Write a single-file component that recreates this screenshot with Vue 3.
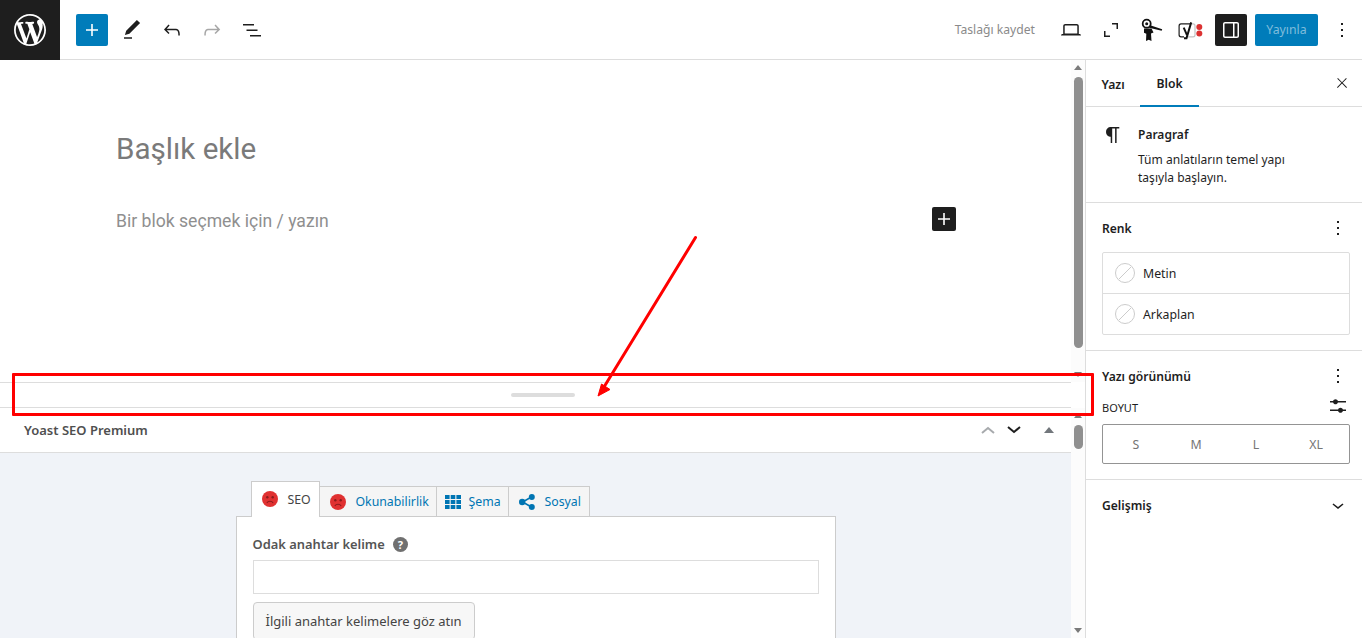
<script setup>
const icons = {
  plus: 'M18 11.2h-5.2V6h-1.6v5.2H6v1.6h5.2V18h1.6v-5.2H18z',
  pencil: 'M20.1 5.1L16.9 2 6.2 12.7l-1.3 4.4 4.5-1.3L20.1 5.1zM4 20.8h8v-1.5H4v1.5z',
  undo: 'M18.3 11.7c-.6-.6-1.4-.9-2.3-.9H6.7l2.9-3.3-1.1-1-4.5 5L8.5 16l1-1-2.7-2.7H16c.5 0 .9.2 1.3.5 1 1 1 3.4 1 4.5v.3h1.5v-.2c0-1.5 0-4.3-1.5-5.7z',
  redo: 'M15.6 6.5l-1.1 1 2.9 3.3H8c-.9 0-1.7.3-2.3.9-1.4 1.5-1.4 4.2-1.4 5.6v.2h1.500v-.3c0-1.1 0-3.5 1-4.5.3-.3.7-.5 1.3-.5h9.2L14.5 15l1.1 1.1 4.6-4.6-4.6-5z',
  list: 'M3 6h11v1.5H3V6zm3.5 5.5h11V13h-11v-1.5zM21 17H10v1.5h11V17z',
  laptop: 'M20.5 16h-.7V8c0-1.1-.9-2-2-2H6.2c-1.1 0-2 .9-2 2v8h-.7c-.8 0-1.5.7-1.5 1.5h20c0-.8-.7-1.5-1.5-1.5zM5.7 8c0-.3.2-.5.5-.5h11.6c.3 0 .5.2.5.5v7.6H5.7V8z',
  fullscreen: 'M13 5h6v6h-1.5V6.5H13V5zM5 13h1.500v4.500H11V19H5v-6z',
  sidebar: 'M18 4H6c-1.1 0-2 .9-2 2v12c0 1.1.9 2 2 2h12c1.1 0 2-.9 2-2V6c0-1.1-.9-2-2-2zm-4 14.5H6c-.3 0-.5-.2-.5-.5V6c0-.3.2-.5.5-.5h8v13zm4.5-.5c0 .3-.2.5-.5.5h-2.5v-13H18c.3 0 .5.2.5.5v12z',
  more: 'M13 19h-2v-2h2v2zm0-6h-2v-2h2v2zm0-6h-2V5h2v2z',
  close: 'M13 11.8l6.1-6.3-1-1-6.1 6.2-6.1-6.2-1 1 6.1 6.3-6.5 6.7 1 1 6.5-6.6 6.5 6.6 1-1z',
  paragraph: 'M18.3 4H9.9v-.1l-.9.2c-2.3.4-4 2.4-4 4.8s1.7 4.4 4 4.8l.7.1V20h1.5V5.5h2.9V20h1.5V5.5h2.7V4z',
  chevron: 'M17.5 11.6L12 16l-5.5-4.4.9-1.2L12 14l4.5-3.6 1 1.2z',
  settings: 'M14.5 13.8c-1.1 0-2.1.7-2.4 1.8H4V17h8.1c.3 1 1.3 1.8 2.4 1.8s2.1-.7 2.4-1.8H20v-1.5h-3.1c-.3-1-1.3-1.7-2.4-1.7zM11.9 7c-.3-1-1.3-1.8-2.4-1.8S7.4 6 7.1 7H4v1.5h3.1c.3 1 1.3 1.8 2.4 1.8s2.1-.7 2.4-1.8H20V7h-8.1z',
}
const wp = 'M20 10c0-5.51-4.49-10-10-10C4.48 0 0 4.49 0 10c0 5.52 4.48 10 10 10 5.51 0 10-4.48 10-10zM7.78 15.37L4.37 6.22c.55-.02 1.17-.08 1.17-.08.5-.06.44-1.13-.06-1.11 0 0-1.45.11-2.37.11-.18 0-.37 0-.58-.01C4.12 2.69 6.87 1.11 10 1.11c2.33 0 4.45.87 6.05 2.34-.68-.11-1.65.39-1.65 1.58 0 .74.45 1.36.9 2.1.35.61.55 1.36.55 2.46 0 1.49-1.4 5-1.4 5l-3.03-8.37c.54-.02.82-.17.82-.17.5-.05.44-1.25-.06-1.22 0 0-1.44.12-2.38.12-.87 0-2.33-.12-2.33-.12-.5-.03-.56 1.2-.06 1.22l.92.08 1.26 3.41zM17.41 10c.24-.64.74-1.87.43-4.25.7 1.29 1.05 2.71 1.05 4.25 0 3.29-1.73 6.24-4.4 7.78.97-2.59 1.94-5.2 2.92-7.78zM6.1 18.09C3.12 16.65 1.11 13.53 1.11 10c0-1.3.23-2.48.72-3.59C3.25 10.3 4.67 14.2 6.1 18.09zm4.03-6.63l2.58 6.98c-.86.29-1.76.45-2.71.45-.79 0-1.57-.11-2.29-.33.81-2.38 1.62-4.74 2.42-7.1z'
const sizes = ['S', 'M', 'L', 'XL']
const colors = ['Metin', 'Arkaplan']
</script>

<template>
  <div class="page">
    <header class="topbar">
      <div class="logo">
        <svg width="32" height="32" viewBox="0 0 20 20"><path fill="#fff" :d="wp" /></svg>
      </div>
      <div class="tools">
        <button class="inserter"><svg class="ic" viewBox="0 0 24 24"><path fill="#fff" :d="icons.plus" /></svg></button>
        <span class="tool first"><svg class="ic" viewBox="0 0 24 24"><path :d="icons.pencil" /></svg></span>
        <span class="tool"><svg class="ic" viewBox="0 0 24 24"><path :d="icons.undo" /></svg></span>
        <span class="tool"><svg class="ic" viewBox="0 0 24 24"><path fill="#a7a7a7" :d="icons.redo" /></svg></span>
        <span class="tool"><svg class="ic" viewBox="0 0 24 24"><path :d="icons.list" /></svg></span>
      </div>
      <div class="actions">
        <span class="save">Taslağı kaydet</span>
        <span class="tool"><svg class="ic" viewBox="0 0 24 24"><path :d="icons.laptop" /></svg></span>
        <span class="tool"><svg class="ic" viewBox="0 0 24 24"><path :d="icons.fullscreen" /></svg></span>
        <span class="tool"><svg class="ic" viewBox="0 0 24 24">
          <circle cx="7.700" cy="5.700" r="4" fill="none" stroke="#111" stroke-width="1.800" />
          <circle cx="7.700" cy="5.700" r="1.500" fill="#111" />
          <path d="M11.200 7.300L23.200 11.200l-.5 1.600L10 9.800z" fill="#111" />
          <path d="M5 10.500h7.500l2 4-2.500 1 .5 7.500-2.800-1.300-2.700 1.300.3-7.300-2.300-1z" fill="#111" />
        </svg></span>
        <span class="tool yoast"><svg width="28" height="24" viewBox="0 0 28 24">
          <path d="M14 5.900H5C3.800 5.900 3.100 6.700 3.100 8v8.800c0 1.200.7 2 1.900 2h3" fill="none" stroke="#1e1e1e" stroke-width="1.200" />
          <path d="M15.500 5.900H17c1.200 0 2 .8 2 2v9c0 1.200-.8 1.900-2 1.900h-5.500" fill="none" stroke="#c4c4c4" stroke-width="1.200" />
          <path d="M7.700 9.600l3.300 7.600" fill="none" stroke="#111" stroke-width="2" />
          <path d="M15.200 4.400l-4.700 15.800H8" fill="none" stroke="#111" stroke-width="2" />
          <circle cx="23.300" cy="9" r="3" fill="#dc3232" />
          <circle cx="23.300" cy="15.500" r="3" fill="#dc3232" />
        </svg></span>
        <span class="side-toggle"><svg class="ic" viewBox="0 0 24 24"><path fill="#fff" :d="icons.sidebar" /></svg></span>
        <span class="publish">Yayınla</span>
        <span class="more-top"><svg class="ic" viewBox="0 0 24 24"><path :d="icons.more" /></svg></span>
      </div>
    </header>

    <div class="body">
      <main class="left">
        <section class="editor">
          <div class="canvas">
            <h1 class="title">Başlık ekle</h1>
            <div class="para-row">
              <span class="para-ph">Bir blok seçmek için / yazın</span>
              <span class="block-plus"><svg width="24" height="24" viewBox="0 0 24 24"><path fill="#fff" :d="icons.plus" /></svg></span>
            </div>
          </div>
          <div class="scrollbar">
            <i class="arrow up a1"></i>
            <i class="thumb thumb-a"></i>
            <i class="arrow down push"></i>
          </div>
        </section>

        <div class="resizer"><i class="grip"></i></div>

        <section class="metabox">
          <div class="mb-main">
            <div class="mb-head">
              <span class="mb-title">Yoast SEO Premium</span>
              <div class="mb-ctrl">
                <svg class="chev" viewBox="0 0 14 8"><path d="M1 7l6-5 6 5" fill="none" stroke="#a7aaad" stroke-width="2" /></svg>
                <svg class="chev chev-b" viewBox="0 0 14 8"><path d="M1 1l6 5 6-5" fill="none" stroke="#1e1e1e" stroke-width="2" /></svg>
                <i class="tri"></i>
              </div>
            </div>
            <div class="mb-content">
              <div class="panel-wrap">
                <div class="tabs">
                  <div class="tab active">
                    <svg class="face" viewBox="0 0 16 16"><circle cx="8" cy="8" r="8" fill="#e03131" /><circle cx="5.300" cy="6.300" r="1.200" fill="#8a1c1c" /><circle cx="10.700" cy="6.300" r="1.200" fill="#8a1c1c" /><path d="M4.800 12c1.500-2.300 4.900-2.300 6.400 0" fill="none" stroke="#8a1c1c" stroke-width="1.100" /></svg>
                    <span>SEO</span>
                  </div>
                  <div class="tab t-read">
                    <svg class="face" viewBox="0 0 16 16"><circle cx="8" cy="8" r="8" fill="#e03131" /><circle cx="5.300" cy="6.300" r="1.200" fill="#8a1c1c" /><circle cx="10.700" cy="6.300" r="1.200" fill="#8a1c1c" /><path d="M4.800 12c1.500-2.300 4.900-2.300 6.400 0" fill="none" stroke="#8a1c1c" stroke-width="1.100" /></svg>
                    <span>Okunabilirlik</span>
                  </div>
                  <div class="tab t-schema">
                    <svg class="grid-ic" viewBox="0 0 16 16"><path fill="#0075b3" d="M0 1h4.600v4H0zM5.700 1h4.600v4H5.700zM11.400 1H16v4h-4.600zM0 6h4.600v4H0zM5.700 6h4.600v4H5.700zM11.400 6H16v4h-4.600zM0 11h4.600v4H0zM5.700 11h4.600v4H5.700zM11.400 11H16v4h-4.600z" /></svg>
                    <span>Şema</span>
                  </div>
                  <div class="tab t-social">
                    <svg class="share-ic" viewBox="0 0 16 16"><path d="M12.500 3L3.500 8l9 5" fill="none" stroke="#0075b3" stroke-width="1.600" /><circle cx="12.800" cy="3" r="3" fill="#0075b3" /><circle cx="3.200" cy="8" r="3.200" fill="#0075b3" /><circle cx="12.800" cy="13" r="3" fill="#0075b3" /></svg>
                    <span>Sosyal</span>
                  </div>
                </div>
                <div class="panel">
                  <div class="kw-label">
                    <span>Odak anahtar kelime</span>
                    <span class="help">?</span>
                  </div>
                  <div class="kw-input"></div>
                  <div class="kw-btn">İlgili anahtar kelimelere göz atın</div>
                </div>
              </div>
            </div>
          </div>
          <div class="scrollbar">
            <i class="arrow up a2"></i>
            <i class="thumb thumb-b"></i>
            <i class="arrow down push"></i>
          </div>
        </section>
      </main>

      <aside class="sidebar">
        <div class="side-tabs">
          <span class="side-tab">Yazı</span>
          <span class="side-tab current">Blok</span>
          <svg class="side-close" viewBox="0 0 24 24"><path :d="icons.close" /></svg>
        </div>

        <div class="card">
          <svg class="ic card-ic" viewBox="0 0 24 24"><path :d="icons.paragraph" /></svg>
          <div>
            <div class="card-title">Paragraf</div>
            <p class="card-desc">Tüm anlatıların temel yapı<br />taşıyla başlayın.</p>
          </div>
        </div>

        <div class="group g-color">
          <div class="g-head"><span class="g-title">Renk</span><svg class="ic" viewBox="0 0 24 24"><path :d="icons.more" /></svg></div>
          <div class="color-box">
            <div v-for="c in colors" :key="c" class="color-row">
              <svg width="20" height="20" viewBox="0 0 20 20"><circle cx="10" cy="10" r="9.500" fill="#fff" stroke="#ccc" /><path d="M4 16L16 4" stroke="#ccc" /></svg>
              <span>{{ c }}</span>
            </div>
          </div>
        </div>

        <div class="group g-type">
          <div class="g-head"><span class="g-title">Yazı görünümü</span><svg class="ic" viewBox="0 0 24 24"><path :d="icons.more" /></svg></div>
          <div class="size-head"><span>BOYUT</span><svg class="ic" viewBox="0 0 24 24"><path :d="icons.settings" /></svg></div>
          <div class="size-box">
            <span v-for="s in sizes" :key="s">{{ s }}</span>
          </div>
        </div>

        <div class="adv"><span class="g-title">Gelişmiş</span><svg class="ic" viewBox="0 0 24 24"><path :d="icons.chevron" /></svg></div>
      </aside>
    </div>

    <div class="red-box"></div>
    <svg class="red-arrow" width="1362" height="638" viewBox="0 0 1362 638">
      <path d="M695.500 237.500L604 387" stroke="#f00" stroke-width="3" stroke-linecap="round" fill="none" />
      <path d="M598 396L601.500 384L610 389.500z" fill="#f00" stroke="#f00" stroke-width="1" />
    </svg>
  </div>
</template>

<style>
html, body { margin: 0; overflow: hidden; background: #fff; }
</style>

<style scoped>
.page { position: relative; width: 1362px; height: 638px; overflow: hidden; background: #fff; font-family: "Noto Sans", "Open Sans", sans-serif; color: #1e1e1e; font-size: 13px; }
.topbar { display: flex; align-items: center; justify-content: space-between; height: 60px; box-sizing: border-box; border-bottom: 1px solid #ddd; }
.logo { width: 60px; height: 60px; background: #1e1e1e; display: flex; align-items: center; justify-content: center; margin-bottom: -1px; position: relative; }
.tools { display: flex; align-items: center; flex: 1; padding-left: 16px; }
.inserter { width: 32px; height: 32px; padding: 0; border: 0; border-radius: 2px; background: #007cba; display: flex; align-items: center; justify-content: center; }
.ic { width: 24px; height: 24px; display: block; fill: #1e1e1e; }
.tool { width: 40px; height: 32px; display: flex; align-items: center; justify-content: center; }
.tool.first { margin-left: 4px; }
.actions { display: flex; align-items: center; }
.save { color: #8a8a8a; font-size: 12.150px; margin-right: 16px; }
.yoast { margin-right: 5px; margin-left: -1px; }
.side-toggle { width: 32px; height: 32px; background: #1e1e1e; border-radius: 2px; display: flex; align-items: center; justify-content: center; }
.publish { width: 63px; height: 32px; margin-left: 8px; background: #007cba; border-radius: 2px; color: #7fbddc; font-size: 12.300px; display: flex; align-items: center; justify-content: center; }
.more-top { margin-left: 12px; margin-right: 8px; }

.body { display: flex; height: 578px; }
.left { width: 1085px; border-right: 1px solid #ddd; display: flex; flex-direction: column; flex: none; }
.editor { height: 322px; display: flex; flex: none; }
.canvas { flex: 1; padding: 0 115px 0 116px; font-family: Roboto, "Noto Sans", sans-serif; }
.title { margin: 67px 0 0; font-size: 29.600px; line-height: 44px; font-weight: 400; color: #7a7a7a; }
.para-row { display: flex; justify-content: space-between; align-items: center; margin-top: 36px; height: 24px; }
.para-ph { font-size: 17.600px; color: #8f8f8f; line-height: 24px; margin-top: 4px; }
.block-plus { width: 24px; height: 24px; background: #1e1e1e; border-radius: 2px; display: block; }
.block-plus svg { display: block; }

.scrollbar { width: 14px; background: #fcfcfc; display: flex; flex-direction: column; align-items: center; flex: none; }
.arrow { width: 0; height: 0; border-left: 4.500px solid transparent; border-right: 4.500px solid transparent; display: block; }
.arrow.up { border-bottom: 5px solid #7a7a7a; }
.a1 { margin-top: 5px; }
.a2 { margin-top: 5px; }
.arrow.down { border-top: 5px solid #7a7a7a; margin-bottom: 5px; }
.push { margin-top: auto; }
.thumb { width: 9px; background: #8f8f8f; border-radius: 5px; display: block; margin-top: 7px; }
.thumb-a { height: 271px; }
.thumb-b { height: 24px; }

.resizer { height: 26px; flex: none; box-sizing: border-box; border-top: 1px solid #ddd; border-bottom: 1px solid #ddd; display: flex; justify-content: center; padding-top: 10px; width: 1071px; }
.grip { width: 64px; height: 4px; background: #ddd; border-radius: 2px; display: block; margin-left: 15px; }

.metabox { flex: 1; display: flex; min-height: 0; }
.mb-main { flex: 1; min-width: 0; display: flex; flex-direction: column; }
.mb-head { height: 45px; flex: none; box-sizing: border-box; border-bottom: 1px solid #ddd; display: flex; align-items: center; justify-content: space-between; padding: 0 17px 0 24px; background: #fff; }
.mb-title { font-weight: 600; color: #4f4f4f; font-size: 13px; }
.mb-ctrl { display: flex; align-items: center; }
.chev { width: 14px; height: 8px; display: block; }
.chev-b { margin-left: 12px; }
.tri { width: 0; height: 0; border-left: 5px solid transparent; border-right: 5px solid transparent; border-bottom: 6px solid #72777c; margin-left: 23px; display: block; }
.mb-content { flex: 1; background: #f0f3f8; padding-top: 28px; overflow: hidden; }
.panel-wrap { width: 600px; margin: 0 auto; }
.tabs { display: flex; align-items: flex-end; padding-left: 15px; position: relative; z-index: 1; margin-bottom: -1px; }
.tab { box-sizing: border-box; height: 31px; display: flex; align-items: center; background: #f5f5f5; border: 1px solid #ccc; border-left: 0; color: #0075b3; font-size: 12.300px; }
.tab.active { height: 36px; width: 69px; background: #fff; border-left: 1px solid #ccc; border-bottom: 0; color: #444; padding: 0 0 1px 10px; }
.face { width: 16px; height: 16px; display: block; margin-right: 10px; flex: none; }
.t-read { width: 117px; padding-left: 10px; }
.t-schema { width: 72px; padding-left: 8px; }
.grid-ic { width: 16px; height: 16px; margin-right: 8px; flex: none; }
.t-social { width: 81px; padding-left: 10px; }
.share-ic { width: 16px; height: 16px; margin-right: 10px; flex: none; }
.panel { background: #fff; border: 1px solid #ccc; padding: 16px; box-sizing: border-box; height: 200px; }
.kw-label { display: flex; align-items: center; gap: 8px; font-weight: 600; font-size: 12.900px; color: #555; height: 22px; }
.help { width: 15px; height: 15px; border-radius: 50%; background: #707070; color: #fff; font-size: 11px; font-weight: 700; display: flex; align-items: center; justify-content: center; }
.kw-input { height: 34px; margin-top: 5px; box-sizing: border-box; border: 1px solid #ddd; background: #fff; }
.kw-btn { display: inline-block; margin-top: 8px; padding: 0 12px; height: 38px; line-height: 36px; box-sizing: border-box; background: #f7f7f7; border: 1px solid #ccc; border-radius: 4px; color: #444; font-size: 13px; }

.sidebar { flex: 1; min-width: 0; display: flex; flex-direction: column; }
.side-tabs { height: 47px; box-sizing: border-box; border-bottom: 1px solid #ddd; display: flex; align-items: stretch; flex: none; }
.side-tab { display: flex; align-items: center; justify-content: center; font-weight: 600; font-size: 12.200px; height: 47px; box-sizing: border-box; padding-top: 1px; }
.side-tab:first-child { width: 54px; }
.side-tab.current { width: 59px; border-bottom: 2px solid #007cba; }
.side-close { width: 16px; height: 16px; display: block; fill: #1e1e1e; margin: 15px 12px 0 auto; }
.card { display: flex; height: 96px; box-sizing: border-box; border-bottom: 1px solid #ddd; padding: 16px 16px 0 15px; flex: none; }
.card-ic { margin-right: 13px; flex: none; }
.card-title { font-weight: 600; font-size: 12px; line-height: 24px; }
.card-desc { margin: 4px 0 0; font-size: 12.050px; line-height: 18px; }
.group { box-sizing: border-box; border-bottom: 1px solid #ddd; padding: 0 12px 0 16px; flex: none; }
.g-color { height: 148px; }
.g-type { height: 129px; }
.g-head { display: flex; align-items: center; justify-content: space-between; height: 24px; margin-top: 13px; }
.g-title { font-weight: 600; font-size: 12.100px; }
.color-box { margin-top: 12px; width: 248px; box-sizing: border-box; border: 1px solid #ddd; border-radius: 2px; }
.color-row { height: 40px; display: flex; align-items: center; gap: 8px; padding-left: 12px; font-size: 12.300px; box-sizing: border-box; }
.color-row + .color-row { border-top: 1px solid #ddd; height: 41px; }
.size-head { display: flex; align-items: center; justify-content: space-between; margin-top: 6px; height: 24px; font-size: 11px; text-transform: uppercase; }
.size-head span { margin-top: 3px; }
.size-box { width: 248px; height: 40px; margin-top: 6px; box-sizing: border-box; border: 1px solid #949494; border-radius: 2px; display: grid; grid-template-columns: repeat(4, 60px); padding: 0 3px; align-items: center; justify-items: center; color: #757575; font-size: 12.300px; }
.adv { display: flex; align-items: center; justify-content: space-between; padding: 0 12px 0 16px; height: 50px; flex: none; }

.red-box { position: absolute; left: 12px; top: 373px; width: 1082px; height: 43px; box-sizing: border-box; border: 3px solid #f00; border-radius: 1px; pointer-events: none; }
.red-arrow { position: absolute; left: 0; top: 0; pointer-events: none; }
</style>
